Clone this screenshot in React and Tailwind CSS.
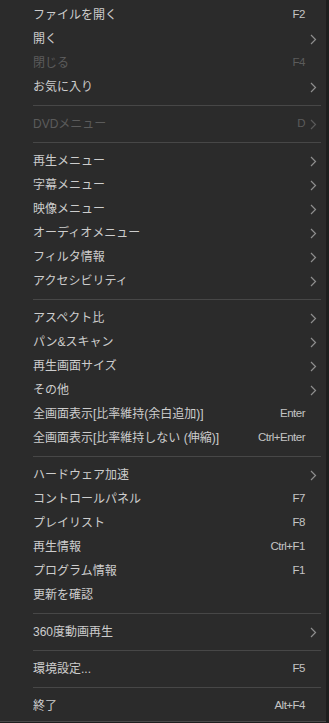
const groups = [
  [
    { label: "ファイルを開く", key: "F2" },
    { label: "開く", sub: true },
    { label: "閉じる", key: "F4", disabled: true },
    { label: "お気に入り", sub: true },
  ],
  [{ label: "DVDメニュー", key: "D", sub: true, disabled: true }],
  [
    { label: "再生メニュー", sub: true },
    { label: "字幕メニュー", sub: true },
    { label: "映像メニュー", sub: true },
    { label: "オーディオメニュー", sub: true },
    { label: "フィルタ情報", sub: true },
    { label: "アクセシビリティ", sub: true },
  ],
  [
    { label: "アスペクト比", sub: true },
    { label: "パン&スキャン", sub: true },
    { label: "再生画面サイズ", sub: true },
    { label: "その他", sub: true },
    { label: "全画面表示[比率維持(余白追加)]", key: "Enter" },
    { label: "全画面表示[比率維持しない (伸縮)]", key: "Ctrl+Enter" },
  ],
  [
    { label: "ハードウェア加速", sub: true },
    { label: "コントロールパネル", key: "F7" },
    { label: "プレイリスト", key: "F8" },
    { label: "再生情報", key: "Ctrl+F1" },
    { label: "プログラム情報", key: "F1" },
    { label: "更新を確認" },
  ],
  [{ label: "360度動画再生", sub: true }],
  [{ label: "環境設定...", key: "F5" }],
  [{ label: "終了", key: "Alt+F4" }],
];

function Chevron({ dim }) {
  return (
    <svg width="7" height="11" viewBox="0 0 7 11" className="block">
      <polyline
        points="1,1 5.5,5.5 1,10"
        fill="none"
        stroke={dim ? "#5a5a5a" : "#8e8e8e"}
        strokeWidth="1.2"
      />
    </svg>
  );
}

function Row({ item }) {
  const dim = item.disabled;
  return (
    <div className="flex h-[24px] items-center">
      <span
        className={`flex-1 truncate text-[12px] ${dim ? "text-[#5b5b5b]" : "text-[#cdcdcd]"}`}
        style={{ fontFamily: '"Liberation Sans", "Noto Sans CJK JP", sans-serif' }}
      >
        {item.label}
      </span>
      {item.key && (
        <span
          className={`text-[11.5px] tracking-[-0.5px] ${dim ? "text-[#5b5b5b]" : "text-[#c4c4c4]"}`}
          style={{ fontFamily: '"Liberation Sans", sans-serif' }}
        >
          {item.key}
        </span>
      )}
      <div className="flex w-[16px] items-center pl-[5px]">
        {item.sub && <Chevron dim={dim} />}
      </div>
    </div>
  );
}

export default function App() {
  return (
    <div className="flex h-[723px] w-[329px] bg-[#1e1e1e]">
      <div className="h-[722px] w-[326px] border-b border-[#4a4a4a] bg-[#2b2b2b] pt-[3px] pl-[33px] pr-[5px]">
        {groups.map((g, gi) => (
          <div key={gi}>
            {gi > 0 && (
              <div className="py-[6px]">
                <div className="h-px bg-[#474747]" />
              </div>
            )}
            {g.map((item, i) => (
              <Row key={i} item={item} />
            ))}
          </div>
        ))}
      </div>
    </div>
  );
}
